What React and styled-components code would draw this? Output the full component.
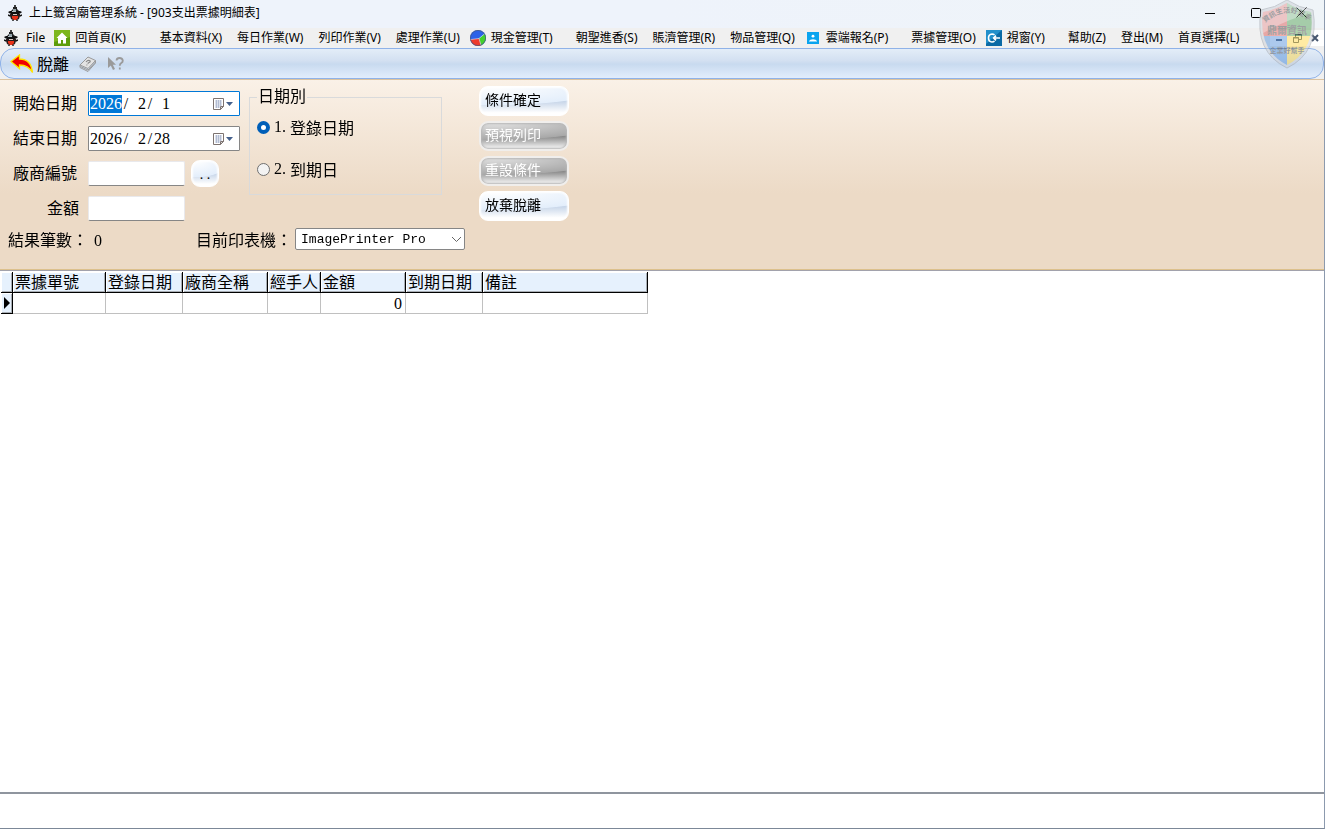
import React, { useState } from "react";
import styled, { createGlobalStyle } from "styled-components";

const uiFont = `"Noto Sans", "Noto Sans CJK TC", sans-serif`;
const formFont = `"Liberation Serif", "Noto Sans CJK TC", serif`;
const monoFont = `"Liberation Mono", "Noto Sans CJK TC", monospace`;

const GlobalStyle = createGlobalStyle`
  * {
    box-sizing: border-box;
  }
  body {
    margin: 0;
    background: #fff;
    color: #000;
    font-family: ${uiFont};
  }
  button, input, select {
    margin: 0;
    padding: 0;
    color: inherit;
    font: inherit;
  }
`;

const Window = styled.div`
  position: relative;
  display: flex;
  flex-direction: column;
  min-height: 100vh;
  border-right: 1px solid #8c9aae;
  border-bottom: 1px solid #7c8898;
`;

/* Title bar */
const TitleBar = styled.header`
  display: flex;
  align-items: center;
  height: 28px;
  padding: 0 12px 3px 8px;
  gap: 7px;
  background: linear-gradient(90deg, #eef3fb 50%, #eff4f8);
`;

const Title = styled.h1`
  margin: 0;
  flex: 1;
  font-size: 12px;
  font-weight: 400;
  line-height: 21px;
`;

const WindowButtons = styled.div`
  display: flex;
`;

const WindowButton = styled.button`
  display: flex;
  align-items: center;
  justify-content: center;
  width: 46px;
  height: 24px;
  border: none;
  background: none;

  &:last-child {
    width: 22px;
    margin-left: 11px;
  }
`;

/* Menu */
const MenuBar = styled.nav`
  display: flex;
  align-items: center;
  height: 20px;
  padding: 0 0 0 4px;
  background: #f0f0f0;
`;

const MenuList = styled.div`
  display: flex;
  flex: 1;
`;

const MenuItem = styled.button`
  display: flex;
  align-items: center;
  gap: 5px;
  height: 20px;
  padding-left: ${({ $hasIcon }) => ($hasIcon ? "3px" : "8px")};
  padding-right: ${({ $space }) => $space || 7}px;
  border: none;
  background: none;
  font-size: 12px;
  line-height: 20px;
  white-space: nowrap;
`;

const MdiButtons = styled.div`
  display: flex;
  height: 16px;
  background: #fff;
`;

const MdiButton = styled.button`
  display: flex;
  align-items: center;
  justify-content: center;
  width: 18px;
  height: 16px;
  border: none;
  background: none;
`;

/* Toolbar */
const ToolBarBack = styled.div`
  background: #f0f0f0;
`;

const ToolBar = styled.div`
  display: flex;
  align-items: center;
  gap: 10px;
  height: 31px;
  padding: 0 9px;
  border: 1px solid #8fb2e8;
  border-radius: 14px;
  background: linear-gradient(#e3edf8, #d3e0f1 40%, #c8daef 52%, #e2edfc);
`;

const ToolButton = styled.button`
  display: flex;
  align-items: center;
  gap: 3px;
  border: none;
  background: none;
  font-size: 16px;
  line-height: 24px;
`;

/* Condition panel */
const Panel = styled.form`
  padding: 6px 8px 17px;
  border-top: 1px solid #dcc3a0;
  border-bottom: 1px solid #dcc08c;
  background: linear-gradient(#faf1e7, #ecdac6 60%);
  font-family: ${formFont};
  font-size: 16px;
`;

const Conditions = styled.div`
  display: flex;
  align-items: flex-start;
`;

const Fields = styled.div`
  display: grid;
  grid-template-columns: 72px 152px;
  grid-auto-rows: 35px;
  column-gap: 8px;
  align-items: center;
`;

const FieldLabel = styled.label`
  padding-right: ${({ $short }) => ($short ? "1px" : "3px")};
  line-height: 24px;
  text-align: right;
  white-space: nowrap;
`;

const FieldLine = styled.div`
  display: flex;
  align-items: center;
  gap: 6px;
`;

const TextBox = styled.input`
  width: 97px;
  height: 25px;
  padding: 0 2px;
  border: 1px solid #e9e9ec;
  border-bottom-color: #868686;
  border-radius: 2px;
  background: #fff;
  outline: none;
`;

const DateBox = styled.div`
  display: flex;
  align-items: center;
  height: 25px;
  padding: 0 5px 0 1px;
  border: 1px solid #868686;
  border-radius: 1px;
  background: #fff;

  &:focus-within {
    border-color: #0078d7;
  }
`;

const DatePart = styled.input`
  width: ${({ $digits }) => $digits * 8}px;
  height: 18px;
  border: none;
  background: none;
  text-align: right;
  outline: none;
  caret-color: transparent;

  &:focus {
    background: #0078d7;
    color: #fff;
  }
`;

const Slash = styled.span`
  width: 8px;
  text-align: center;
`;

const CalendarButton = styled.button`
  display: flex;
  align-items: center;
  margin-left: auto;
  border: none;
  background: none;
`;

const Group = styled.fieldset`
  width: 193px;
  height: 108px;
  margin: 1px 0 0 9px;
  padding: 7px 7px 0;
  border: 1px solid #d9dadb;
`;

const Legend = styled.legend`
  padding: 0 1px;
  line-height: 20px;
`;

const RadioLabel = styled.label`
  display: flex;
  align-items: center;
  gap: 4px;
  height: 26px;
  margin-bottom: 16px;
`;

const RadioNumber = styled.span`
  width: 16px;
  margin-right: -4px;
`;

const Radio = styled.input`
  appearance: none;
  width: 13px;
  height: 13px;
  border: 1px solid #6e6e6e;
  border-radius: 50%;
  background: #f3f3f3;

  &:checked {
    border: 4px solid #005fb8;
    background: #fff;
  }
`;

const Actions = styled.div`
  display: flex;
  flex-direction: column;
  gap: 5px;
  margin-left: 37px;
`;

const GlossButton = styled.button`
  width: ${({ $small }) => ($small ? "28px" : "90px")};
  height: ${({ $small }) => ($small ? "27px" : "30px")};
  padding: ${({ $small }) => ($small ? "2px 0 0" : "0 0 1px 5px")};
  border: 1px solid #fff;
  border-radius: 9px;
  background:
    radial-gradient(130% 66% at 15% 0, #fff 0, #e3eefb 96%, transparent 100%),
    linear-gradient(#eef5ff 10%, #c5d4e8 50%, #fff 92%);
  box-shadow: inset 0 0 2px 1px #fff;
  font-size: 14px;
  line-height: 20px;
  text-align: ${({ $small }) => ($small ? "center" : "left")};

  &:disabled {
    border: 2px solid #f0eeec;
    padding-left: 4px;
    background:
      radial-gradient(130% 66% at 15% 0, #e2e2e2 0, #a8a8a8 96%, transparent 100%),
      linear-gradient(#b4b4b4 10%, #868686 50%, #f0f0f0 95%);
    box-shadow: inset 0 0 2px 1px #b8b8b8;
    color: #fff;
  }
`;

const Results = styled.div`
  display: flex;
  align-items: center;
  height: 26px;
`;

const ResultLabel = styled.label`
  padding-top: 4px;
  line-height: 24px;
`;

const Count = styled.output`
  flex: 0 0 108px;
  padding: 4px 0 0 6px;
  line-height: 24px;
`;

const SelectWrapper = styled.div`
  display: grid;
  align-items: center;
  margin-left: 3px;

  & > * {
    grid-area: 1 / 1;
  }
  svg {
    justify-self: end;
    margin-right: 3px;
    pointer-events: none;
  }
`;

const Select = styled.select`
  appearance: none;
  width: 170px;
  height: 22px;
  padding: 0 5px;
  border: 1px solid #868686;
  border-radius: 2px;
  background: #fff;
  font-family: ${monoFont};
  font-size: 13px;
`;

/* Grid */
const GridArea = styled.main`
  flex: 1;
  padding: 1px 1px 0;
  border-top: 1px solid #a2a2ac;
  background: #fff;
  font-family: ${formFont};
  font-size: 16px;
`;

const Grid = styled.table`
  table-layout: fixed;
  width: 647px;
  border-collapse: separate;
  border-spacing: 0;
`;

const HeadCell = styled.th`
  height: 21px;
  padding: 0 0 0 2px;
  border-right: 1px solid #000;
  border-bottom: 1px solid #000;
  background: #e6f1fd;
  box-shadow: inset 1px 1px #fff, inset -1px -1px #a9aeb4;
  font-weight: 400;
  line-height: 19px;
  text-align: left;
  white-space: nowrap;
`;

const Cell = styled.td`
  height: 21px;
  padding: 0 3px 0 2px;
  border-right: 1px solid #c0c0c0;
  border-bottom: 1px solid #c0c0c0;
  line-height: 19px;
  text-align: ${({ $align }) => $align || "left"};
`;

const MarkerCell = styled(HeadCell)`
  svg {
    display: block;
  }
`;

const StatusBar = styled.footer`
  height: 36px;
  border-top: 2px solid #8f959e;
  background: #fff;
`;

const Watermark = styled.div`
  position: absolute;
  top: 0;
  right: 8px;
  opacity: 0.5;
  pointer-events: none;

  svg {
    display: block;
  }
`;

const AppIcon = () => (
  <svg width="14" height="16" viewBox="0 0 14 16">
    <path d="M7 0v3" stroke="#111" strokeWidth="1.6" />
    <path d="M5 2h4v2l2 2H3l2-2z" fill="#222" />
    <path d="M5 4h3v2H5z" fill="#8fa0a6" />
    <path d="M0 7l2-1h10l2 1-1 1-2 1H3L1 8z" fill="#111" />
    <path d="M4 6h4v1H4z" fill="#b5c0c4" />
    <path d="M2 9h10v2l-1 3-2 1H5l-2-1-1-3z" fill="#2a1c1c" />
    <path d="M5 9h4v1H5z" fill="#d8c9c2" />
    <path d="M4 11h6v2l-2 2H6l-2-2z" fill="#e8331a" />
    <path d="M0 10l2 1M14 10l-2 1M5 15v1M9 15v1" stroke="#111" strokeWidth="1.4" />
  </svg>
);

const HomeIcon = () => (
  <svg width="16" height="16" viewBox="0 0 16 16">
    <rect width="16" height="16" fill="#5d9c0a" />
    <path d="M0 0h16v7L0 12z" fill="#7db61c" />
    <path d="M8 2.5L2.5 8H4v5.5h3V10h2v3.5h3V8h1.5z" fill="#fff" />
  </svg>
);

const PieIcon = () => (
  <svg width="16" height="16" viewBox="0 0 16 16">
    <circle cx="8" cy="8" r="8" fill="#2c62e8" />
    <path d="M9 8.500l5.600-4.700A8 8 0 0 1 11 15.400z" fill="#43d12c" />
    <path d="M9 8.500l2 6.900A8 8 0 0 1 .3 9.600z" fill="#ee3a2c" />
    <path d="M9 8.500l5.600-4.700M9 8.500l2 6.900M9 8.500L.3 9.600" stroke="#e8eefc" strokeWidth="0.6" />
    <circle cx="8" cy="8" r="7.600" fill="none" stroke="#4a5a78" strokeWidth="0.7" />
  </svg>
);

const PersonIcon = () => (
  <svg width="16" height="12" viewBox="0 0 16 12">
    <rect x="2" width="12" height="12" fill="#0aa4ef" />
    <circle cx="8" cy="4.2" r="1.4" fill="#fff" />
    <path d="M4 9.6V9q1-1.8 4-1.8T12 9v.6z" fill="#fff" />
  </svg>
);

const SwitchIcon = () => (
  <svg width="16" height="16" viewBox="0 0 16 16">
    <rect width="16" height="16" fill="#0b6aa5" />
    <path d="M0 0h16L0 14z" fill="#2390cb" />
    <path
      d="M8.500 4.900Q7.500 4 6 4 2.500 4.300 2.500 8T6 12Q7.500 12 8.500 11.100M7 8h7M10 5.600L7.600 8 10 10.400"
      fill="none"
      stroke="#fff"
      strokeWidth="1.6"
    />
  </svg>
);

const BackIcon = () => (
  <svg width="24" height="20" viewBox="0 0 24 20">
    <path
      d="M1 7.5L9.5 1v4C17 5 21.5 9 22.5 18.5 19 12.5 15 11 9.5 11v3.5z"
      fill="#f00000"
      stroke="#ffe600"
      strokeWidth="1.3"
    />
  </svg>
);

const BookIcon = () => (
  <svg width="18" height="18" viewBox="0 0 18 18">
    <path d="M1 10l8-8 7.5 3.5-7.5 8z" fill="#e3e3e3" stroke="#999" />
    <path d="M1 10v2.5l8 4 7.5-8.5V5.5M1.5 11.5l7.500 3.5 7.5-8" fill="none" stroke="#999" />
    <path d="M7 7q2-2.5 4-1.2.8 1-1.5 2l-.8.8M7.5 9.8l.8.3" fill="none" stroke="#888" strokeWidth="1.2" />
  </svg>
);

const WhatsThisIcon = () => (
  <svg width="18" height="16" viewBox="0 0 18 16">
    <path d="M1 1v11l2.8-2.5L6 14l2-1-2.2-4.2H9z" fill="#9a9a9a" />
    <path
      d="M9.500 4.500Q9.800 2 12.500 2T15.800 4.500Q16 6 14 7.200 12.800 8 12.800 9.800M12.800 11.500v2"
      fill="none"
      stroke="#9a9a9a"
      strokeWidth="1.8"
    />
  </svg>
);

const CalendarIcon = () => (
  <svg width="21" height="14" viewBox="0 0 21 14">
    <path d="M.5 1.5h10v8l-3 3h-7z" fill="#fff" stroke="#7d7370" />
    <path
      d="M2 4h7M2 6h7M2 8h7M2 10h5M3.500 3v8M5.500 3v8M7.500 3v6"
      stroke="#a7b3cb"
      strokeWidth="0.8"
    />
    <path d="M10.500 9.500h-3v3z" fill="#d8d8d8" stroke="#7d7370" />
    <path d="M13 5h7l-3.500 4z" fill="#44608c" />
  </svg>
);

const Shield = () => (
  <svg width="58" height="70" viewBox="0 0 58 70">
    <defs>
      <clipPath id="shield-shape">
        <path d="M29 3Q40 10 53 12 58 50 29 65 0 50 5 12 18 10 29 3z" />
      </clipPath>
      <path id="shield-arc" d="M7 23Q29 3 52 22" />
    </defs>
    <path d="M29 0Q41 8 55 10 62 52 29 68-4 52 3 10 17 8 29 0z" fill="#cdd0d6" stroke="#9da2aa" />
    <g clipPath="url(#shield-shape)">
      <path d="M0 0h29v36H0z" fill="#e0605c" />
      <path d="M29 0h29v36H29z" fill="#5da65c" />
      <path d="M0 36h29v34H0z" fill="#5b95dc" />
      <path d="M29 36h29v34H29z" fill="#ffd84c" />
      <path d="M0 0h58v12Q30 18 0 36z" fill="#fff" opacity="0.35" />
    </g>
    <g fill="#4c4c4c" fontFamily="Noto Sans CJK TC" fontWeight="700">
      <text fontSize="7">
        <textPath href="#shield-arc">資訊生活好幫手</textPath>
      </text>
      <text x="29" y="34" fontSize="10" textAnchor="middle">鼎爾資訊</text>
      <text x="29" y="53" fontSize="7" textAnchor="middle">企業好幫手</text>
    </g>
  </svg>
);

const menuItems = [
  { text: "File", space: 6 },
  { text: "回首頁(K)", icon: <HomeIcon />, space: 26 },
  { text: "基本資料(X)" },
  { text: "每日作業(W)" },
  { text: "列印作業(V)" },
  { text: "處理作業(U)" },
  { text: "現金管理(T)", icon: <PieIcon />, space: 15 },
  { text: "朝聖進香(S)" },
  { text: "賬濟管理(R)" },
  { text: "物品管理(Q)" },
  { text: "雲端報名(P)", icon: <PersonIcon />, space: 15 },
  { text: "票據管理(O)" },
  { text: "視窗(Y)", icon: <SwitchIcon />, space: 15 },
  { text: "幫助(Z)" },
  { text: "登出(M)" },
  { text: "首頁選擇(L)" },
];

const columns = [
  { title: "票據單號", width: 93 },
  { title: "登錄日期", width: 77 },
  { title: "廠商全稱", width: 85 },
  { title: "經手人", width: 53 },
  { title: "金額", width: 85, align: "right" },
  { title: "到期日期", width: 77 },
  { title: "備註", width: 165 },
];

const rows = [["", "", "", "", "0", "", ""]];

const dateTypes = ["登錄日期", "到期日"];

const DateField = ({ id, label, year, month, day, focused }) => (
  <>
    <FieldLabel htmlFor={id}>{label}</FieldLabel>
    <DateBox>
      <DatePart id={id} $digits={4} defaultValue={year} autoFocus={focused} />
      <Slash>/</Slash>
      <DatePart $digits={2} defaultValue={month} aria-label={`${label} 月`} />
      <Slash>/</Slash>
      <DatePart $digits={2} defaultValue={day} aria-label={`${label} 日`} />
      <CalendarButton type="button" aria-label={`${label} 日曆`}>
        <CalendarIcon />
      </CalendarButton>
    </DateBox>
  </>
);

export default function App() {
  const [dateType, setDateType] = useState(0);

  return (
    <Window>
      <GlobalStyle />
      <TitleBar>
        <AppIcon />
        <Title>上上籤宮廟管理系統 - [903支出票據明細表]</Title>
        <WindowButtons>
          <WindowButton aria-label="最小化">
            <svg width="10" height="10">
              <path d="M0 5.500h10" stroke="#000" />
            </svg>
          </WindowButton>
          <WindowButton aria-label="最大化">
            <svg width="10" height="10">
              <rect x="0.5" y="0.5" width="9" height="9" rx="1" fill="none" stroke="#000" />
            </svg>
          </WindowButton>
          <WindowButton aria-label="關閉">
            <svg width="11" height="11">
              <path d="M.5.5l10 10M10.5.5l-10 10" stroke="#000" />
            </svg>
          </WindowButton>
        </WindowButtons>
      </TitleBar>

      <MenuBar>
        <AppIcon />
        <MenuList>
          {menuItems.map((item) => (
            <MenuItem key={item.text} $hasIcon={!!item.icon} $space={item.space}>
              {item.icon}
              {item.text}
            </MenuItem>
          ))}
        </MenuList>
        <MdiButtons>
          <MdiButton aria-label="最小化子視窗">
            <svg width="8" height="8">
              <path d="M1 6h6" stroke="#46566e" strokeWidth="2" />
            </svg>
          </MdiButton>
          <MdiButton aria-label="還原子視窗">
            <svg width="9" height="9">
              <path d="M2.5 3V.5h6v5H6M2 1h7M.5 3.5h5v5h-5zM0 4h6" fill="none" stroke="#46566e" />
            </svg>
          </MdiButton>
          <MdiButton aria-label="關閉子視窗">
            <svg width="8" height="8">
              <path d="M1 1l6 6M7 1L1 7" stroke="#46566e" strokeWidth="2" />
            </svg>
          </MdiButton>
        </MdiButtons>
      </MenuBar>

      <ToolBarBack>
        <ToolBar>
          <ToolButton>
            <BackIcon />
            脫離
          </ToolButton>
          <ToolButton aria-label="說明" disabled>
            <BookIcon />
          </ToolButton>
          <ToolButton aria-label="這是什麼" disabled>
            <WhatsThisIcon />
          </ToolButton>
        </ToolBar>
      </ToolBarBack>

      <Panel onSubmit={(e) => e.preventDefault()}>
        <Conditions>
          <Fields>
            <DateField id="start" label="開始日期" year="2026" month="2" day="1" focused />
            <DateField id="end" label="結束日期" year="2026" month="2" day="28" />
            <FieldLabel htmlFor="vendor">廠商編號</FieldLabel>
            <FieldLine>
              <TextBox id="vendor" />
              <GlossButton type="button" $small>
                . .
              </GlossButton>
            </FieldLine>
            <FieldLabel htmlFor="amount" $short>
              金額
            </FieldLabel>
            <FieldLine>
              <TextBox id="amount" />
            </FieldLine>
          </Fields>

          <Group>
            <Legend>日期別</Legend>
            {dateTypes.map((name, i) => (
              <RadioLabel key={name}>
                <Radio
                  type="radio"
                  name="dateType"
                  checked={dateType === i}
                  onChange={() => setDateType(i)}
                />
                <RadioNumber>{i + 1}.</RadioNumber>
                {name}
              </RadioLabel>
            ))}
          </Group>

          <Actions>
            <GlossButton>條件確定</GlossButton>
            <GlossButton disabled>預視列印</GlossButton>
            <GlossButton disabled>重設條件</GlossButton>
            <GlossButton>放棄脫離</GlossButton>
          </Actions>
        </Conditions>

        <Results>
          <ResultLabel htmlFor="count">結果筆數：</ResultLabel>
          <Count id="count">0</Count>
          <ResultLabel htmlFor="printer">目前印表機：</ResultLabel>
          <SelectWrapper>
            <Select id="printer">
              <option>ImagePrinter Pro</option>
            </Select>
            <svg width="11" height="7">
              <path d="M1 1l4.5 4.5L10 1" fill="none" stroke="#666" />
            </svg>
          </SelectWrapper>
        </Results>
      </Panel>

      <GridArea>
        <Grid>
          <colgroup>
            <col width="12" />
            {columns.map((column) => (
              <col key={column.title} width={column.width} />
            ))}
          </colgroup>
          <thead>
            <tr>
              <MarkerCell as="td" />
              {columns.map((column) => (
                <HeadCell key={column.title}>{column.title}</HeadCell>
              ))}
            </tr>
          </thead>
          <tbody>
            {rows.map((row, rowIndex) => (
              <tr key={rowIndex}>
                <MarkerCell as="td">
                  <svg width="7" height="12">
                    <path d="M1 0l6 6-6 6z" />
                  </svg>
                </MarkerCell>
                {row.map((value, i) => (
                  <Cell key={columns[i].title} $align={columns[i].align}>
                    {value}
                  </Cell>
                ))}
              </tr>
            ))}
          </tbody>
        </Grid>
      </GridArea>

      <StatusBar />

      <Watermark>
        <Shield />
      </Watermark>
    </Window>
  );
}
